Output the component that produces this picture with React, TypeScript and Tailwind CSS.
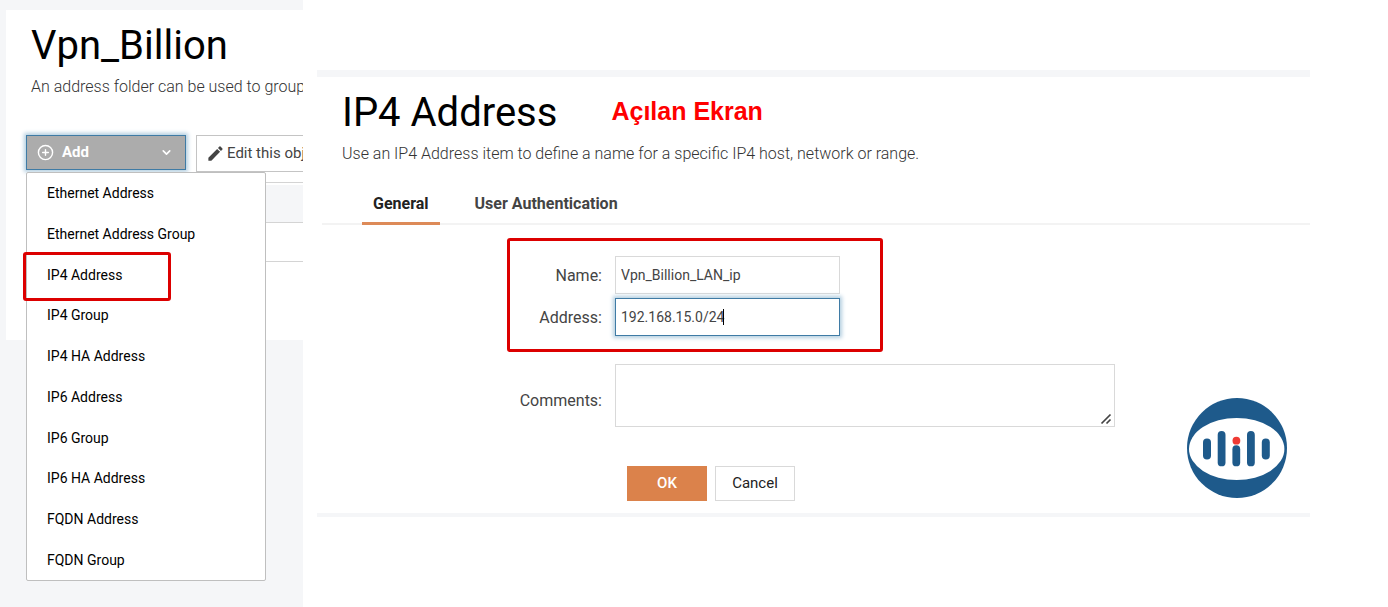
import { useState } from "react";
import { ChevronDown, CirclePlus } from "lucide-react";
import { MdEdit } from "react-icons/md";

const addItems = [
  "Ethernet Address",
  "Ethernet Address Group",
  "IP4 Address",
  "IP4 Group",
  "IP4 HA Address",
  "IP6 Address",
  "IP6 Group",
  "IP6 HA Address",
  "FQDN Address",
  "FQDN Group",
];

const tabs = ["General", "User Authentication"];

function Logo() {
  return (
    <svg viewBox="0 0 100 100" className="h-[100px] w-[100px]" role="img" aria-label="Logo">
      <circle cx="50" cy="50" r="50" fill="#1e5a8b" />
      <ellipse cx="49.7" cy="51" rx="47.7" ry="31" fill="#fff" />
      <g fill="#1e5a8b">
        <rect x="16" y="40.5" width="8" height="21" rx="4" />
        <rect x="30.7" y="33" width="7.8" height="35.3" rx="3.9" />
        <rect x="45.4" y="47.3" width="7.8" height="21" rx="3.9" />
        <rect x="60" y="33" width="7.8" height="35.3" rx="3.9" />
        <rect x="74.8" y="40.5" width="8" height="21" rx="4" />
      </g>
      <circle cx="49.4" cy="42.7" r="3.9" fill="#ef3a34" />
    </svg>
  );
}

function AddMenu() {
  return (
    <div className="relative w-[160px] shrink-0">
      <button
        type="button"
        className="flex h-[35px] w-full items-center border border-[#3f7ba5] bg-[#acacac] pr-3 pl-[10px] text-[15px] font-bold text-white shadow-[0_0_4px_2px_#b4cfe0]"
      >
        <CirclePlus size={17} strokeWidth={2} />
        <span className="ml-2">Add</span>
        <ChevronDown size={13} strokeWidth={3} className="ml-auto" />
      </button>
      <ul className="absolute top-[37px] left-0 z-10 grid h-[409px] w-[240px] auto-rows-fr rounded-xs border border-[#bfbfbf] bg-white text-sm text-black">
        {addItems.map((item) => (
          <li key={item} className="relative flex">
            <button type="button" className="w-full pl-5 text-left">
              {item}
            </button>
            {item === "IP4 Address" && (
              <span className="pointer-events-none absolute -top-[2px] -left-[4px] h-[49px] w-[148px] rounded-[3px] border-3 border-[#dc0000]" />
            )}
          </li>
        ))}
      </ul>
    </div>
  );
}

function FolderPanel() {
  return (
    <section className="w-[303px] shrink-0 overflow-hidden bg-[#f5f6f8] pt-[10px] pl-[6px]">
      <div className="h-[330px] bg-white pt-[13px]">
        <div className="pl-[25px] whitespace-nowrap">
          <h1 className="text-[40px] leading-[46px] text-black">Vpn_Billion</h1>
          <p className="mt-2 text-base leading-5 font-light text-[#333]">An address folder can be used to group</p>
        </div>
        <div className="mt-[38px] flex gap-[10px] pl-5 whitespace-nowrap">
          <AddMenu />
          <button
            type="button"
            className="flex h-[37px] shrink-0 items-center border border-[#c4c4c4] bg-white pr-3 pl-[9px] text-[15px] text-[#444]"
          >
            <MdEdit size={19} className="mr-[2px]" />
            Edit this object
          </button>
        </div>
        <div className="mt-[10px] ml-5 border-t border-[#d4d4d4] pt-[2px]">
          <div className="h-[38px] border-b border-[#d4d4d4] bg-[#f5f6f8]" />
          <div className="h-[39px] border-b border-[#d4d4d4]" />
        </div>
      </div>
    </section>
  );
}

function AddressForm() {
  const [name, setName] = useState("Vpn_Billion_LAN_ip");
  const [address, setAddress] = useState("192.168.15.0/24");

  return (
    <form className="text-[#444]" onSubmit={(e) => e.preventDefault()}>
      <div className="ml-[190px] w-[376px] rounded-[3px] border-3 border-[#dc0000] pt-[15px] pb-[13px]">
        <div className="flex items-center">
          <label htmlFor="name" className="w-[92px] pt-px text-right text-base">Name:</label>
          <input
            id="name"
            value={name}
            onChange={(e) => setName(e.target.value)}
            className="ml-[13px] h-[38px] w-[225px] border border-[#d9d9d9] px-[5px] text-sm outline-none"
          />
        </div>
        <div className="mt-1 flex items-center">
          <label htmlFor="address" className="w-[92px] pt-px text-right text-base">Address:</label>
          <div className="relative ml-[13px]">
            <input
              id="address"
              value={address}
              onChange={(e) => setAddress(e.target.value)}
              className="h-[38px] w-[225px] border border-[#3f7ba5] px-[5px] text-sm shadow-[0_0_4px_2px_#b4cfe0] outline-none"
            />
            <span className="absolute top-[11px] left-[108px] h-4 w-px bg-black" />
          </div>
        </div>
      </div>
      <div className="mt-3 ml-[193px] flex items-center">
        <label htmlFor="comments" className="w-[92px] pt-[10px] text-right text-base">Comments:</label>
        <div className="relative ml-[13px]">
          <textarea id="comments" className="block h-[63px] w-[500px] resize-none border border-[#d9d9d9] p-1 text-sm outline-none" />
          <svg viewBox="0 0 12 12" className="pointer-events-none absolute right-[3px] bottom-[2px] h-3 w-3" stroke="#444" strokeWidth="1.7">
            <path d="M1.5 10.5l9-9M6.5 10.5l4-4" />
          </svg>
        </div>
      </div>
      <div className="mt-[39px] mb-3 ml-[310px] flex gap-2 text-[15px]">
        <button type="submit" className="h-[35px] w-20 bg-[#db824b] font-medium text-white">OK</button>
        <button type="button" className="h-[35px] w-20 border border-[#d9d9d9] bg-white text-[#222]">Cancel</button>
      </div>
    </form>
  );
}

function AddressPanel() {
  const [active, setActive] = useState(tabs[0]);

  return (
    <main className="mt-[70px] mr-[78px] ml-[14px] min-w-0 flex-1 self-start border-t-7 border-b-4 border-[#f5f6f8]">
      <header className="pt-[13px] pl-[25px]">
        <div className="flex items-start">
          <h2 className="text-[40px] leading-[46px] text-black">IP4 Address</h2>
          <span className="ml-[54px] font-['Liberation_Sans',Arial,sans-serif] text-[25px] leading-[42px] font-bold text-[#ff0000]">
            Açılan Ekran
          </span>
        </div>
        <p className="mt-2 text-base leading-5 font-light text-[#333]">
          Use an IP4 Address item to define a name for a specific IP4 host, network or range.
        </p>
      </header>
      <nav className="mt-[19px] ml-[5px] flex gap-6 border-b-2 border-[#f3f3f3] pl-10">
        {tabs.map((tab) => (
          <button
            key={tab}
            type="button"
            onClick={() => setActive(tab)}
            className={`-mb-[2px] h-[42px] border-b-3 px-[11px] pt-[2px] text-base font-bold ${
              active === tab ? "border-[#dd8a58] text-[#222]" : "border-transparent text-[#444]"
            }`}
          >
            {tab}
          </button>
        ))}
      </nav>
      <div className="mt-[13px] flex">
        <AddressForm />
        <div className="mr-[23px] mb-[15px] ml-auto self-end">
          <Logo />
        </div>
      </div>
    </main>
  );
}

export default function App() {
  return (
    <div className="flex min-h-screen bg-white font-[Roboto,sans-serif]">
      <FolderPanel />
      <AddressPanel />
    </div>
  );
}
